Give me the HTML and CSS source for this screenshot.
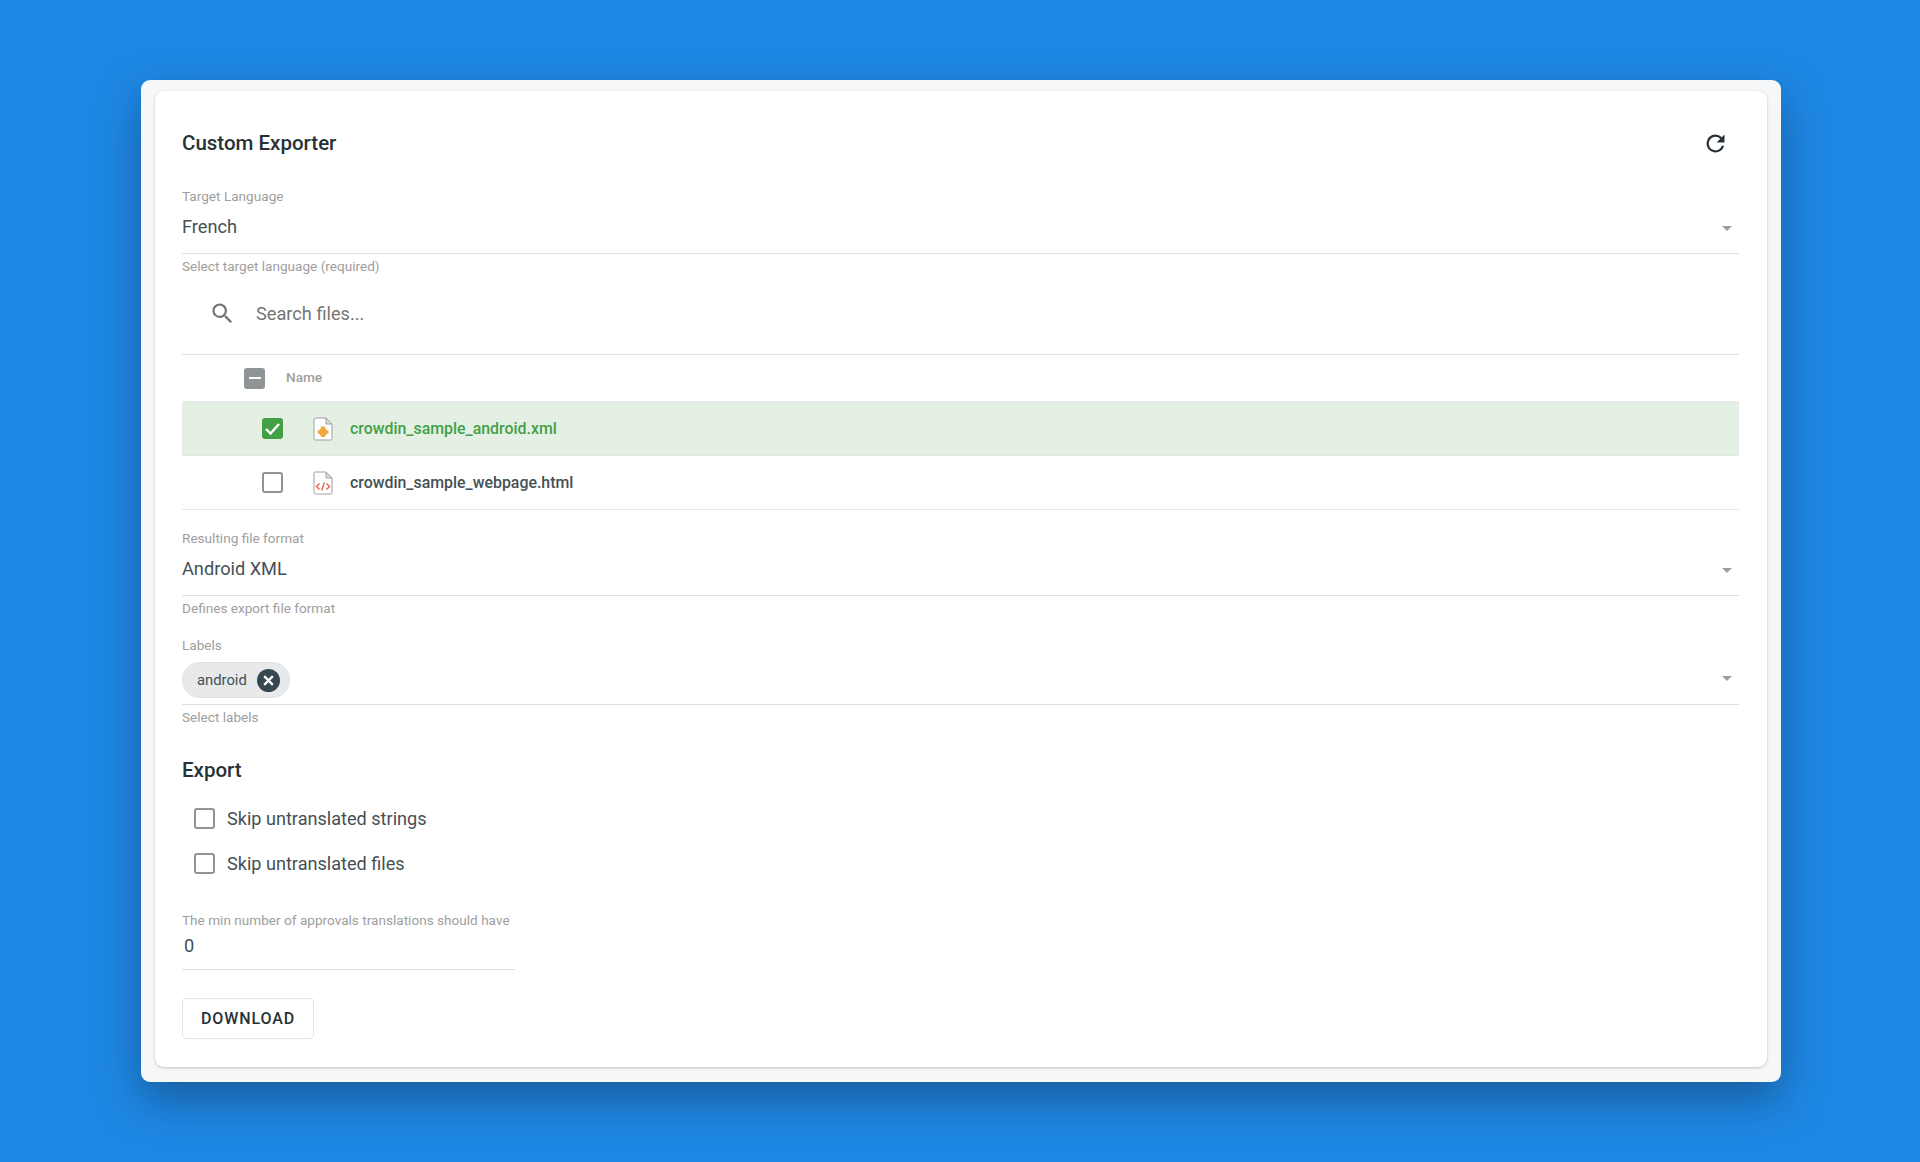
FILE: index.html
```html
<!DOCTYPE html>
<html lang="en">
<head>
<meta charset="utf-8">
<title>Custom Exporter</title>
<link rel="stylesheet" href="styles.css">
</head>
<body>
<main class="frame">
  <section class="card">
    <header class="head">
      <h1 class="title">Custom Exporter</h1>
      <svg class="refresh" viewBox="0 0 24 24"><path d="M17.65 6.35A7.96 7.96 0 0 0 12 4a8 8 0 1 0 7.73 10h-2.08A6 6 0 1 1 12 6c1.66 0 3.14.69 4.22 1.78L13 11h7V4l-2.35 2.35z"/></svg>
    </header>

    <div class="field">
      <div class="label">Target Language</div>
      <div class="select"><span>French</span><i class="caret"></i></div>
      <div class="help">Select target language (required)</div>
    </div>

    <div class="search">
      <svg class="search-icon" viewBox="0 0 24 24"><path d="M15.5 14h-.79l-.28-.27A6.47 6.47 0 0 0 16 9.5 6.5 6.5 0 1 0 9.5 16c1.61 0 3.09-.59 4.23-1.57l.27.28v.79l5 4.99L20.49 19l-4.99-5zm-6 0C7.01 14 5 11.99 5 9.5S7.01 5 9.5 5 14 7.01 14 9.5 11.99 14 9.5 14z"/></svg>
      <span class="search-text">Search files...</span>
    </div>

    <div class="table">
      <div class="thead">
        <span class="box box-mixed"><i></i></span>
        <span class="th">Name</span>
      </div>
      <div class="row row-on">
        <span class="box box-on"><svg viewBox="0 0 21 21"><path d="M4 11l4.500 4.500L17 6" fill="none" stroke="#fff" stroke-width="2.400"/></svg></span>
        <svg class="file" viewBox="0 0 20 24"><path d="M2.500 1h10.500L19 7v14.500a1.500 1.500 0 0 1-1.500 1.500h-15A1.500 1.500 0 0 1 1 21.500v-19A1.500 1.500 0 0 1 2.500 1z" fill="#fff" stroke="#9e9e9e"/><path d="M13 1v6h6z" fill="#e0e0e0" stroke="#9e9e9e"/><circle cx="10" cy="15" r="4" fill="#eeaa3c"/><path d="M7.800 9.500h4.400V20H7.800zM4.500 13.500h11v3h-11z" fill="#eeaa3c"/></svg>
        <span class="name">crowdin_sample_android.xml</span>
      </div>
      <div class="row">
        <span class="box"></span>
        <svg class="file" viewBox="0 0 20 24"><path d="M2.500 1h10.500L19 7v14.500a1.500 1.500 0 0 1-1.500 1.500h-15A1.500 1.500 0 0 1 1 21.500v-19A1.500 1.500 0 0 1 2.500 1z" fill="#fff" stroke="#9e9e9e"/><path d="M13 1v6h6z" fill="#e0e0e0" stroke="#9e9e9e"/><path d="M6.500 12.500L3.500 15.500l3 3M13.500 12.500l3 3-3 3M11.300 11.500l-2.600 8" fill="none" stroke="#ea5a36" stroke-width="1.300"/></svg>
        <span class="name">crowdin_sample_webpage.html</span>
      </div>
    </div>

    <div class="field field-format">
      <div class="label">Resulting file format</div>
      <div class="select"><span>Android XML</span><i class="caret"></i></div>
      <div class="help">Defines export file format</div>
    </div>

    <div class="field field-labels">
      <div class="label">Labels</div>
      <div class="select select-chips">
        <span class="chip">android<svg class="chip-x" viewBox="0 0 24 24"><circle cx="12" cy="12" r="12" fill="#37474f"/><path d="M7.500 7.500l9 9m0-9l-9 9" stroke="#fff" stroke-width="2.400" fill="none"/></svg></span>
        <i class="caret"></i>
      </div>
      <div class="help">Select labels</div>
    </div>

    <h2 class="subtitle">Export</h2>
    <label class="check"><span class="box"></span>Skip untranslated strings</label>
    <label class="check"><span class="box"></span>Skip untranslated files</label>

    <div class="number">
      <div class="label">The min number of approvals translations should have</div>
      <div class="number-value">0</div>
    </div>

    <button class="download" type="button">DOWNLOAD</button>
  </section>
</main>
</body>
</html>
```

FILE: styles.css
```css
* { box-sizing: border-box; }
html, body { margin: 0; height: 100%; }
body {
  background: #1e88e5;
  padding: 80px 139px 80px 141px;
  font-family: Roboto, "Liberation Sans", sans-serif;
  color: #455055;
}
.frame {
  height: 1002px;
  background: #f5f7f8;
  border-radius: 9px;
  padding: 11px 14px 15px;
  box-shadow: 0 18px 44px rgba(20, 50, 85, .5);
}
.card {
  height: 976px;
  background: #fff;
  border-radius: 9px;
  padding: 0 28px 0 27px;
  box-shadow: 0 1px 3px rgba(0, 0, 0, .22);
}
.head {
  height: 97px;
  display: flex;
  align-items: center;
  justify-content: space-between;
  padding-right: 10px;
  padding-top: 14px;
  padding-bottom: 7px;
}
.title { margin: 0; font-size: 20.500px; font-weight: 500; color: #263238; }
.refresh { width: 27px; height: 27px; fill: #263238; }

.label { font-size: 13.600px; line-height: 16px; color: #9e9e9e; }
.help { font-size: 13.600px; line-height: 16px; color: #9e9e9e; margin-top: 4px; }
.select {
  display: flex;
  align-items: center;
  justify-content: space-between;
  height: 50px;
  border-bottom: 1px solid #e0e0e0;
  font-size: 18.200px;
  padding-right: 7px;
  padding-bottom: 4px;
}
.caret {
  width: 0;
  height: 0;
  border: 5px solid transparent;
  border-top: 5px solid #9e9e9e;
  border-bottom: 0;
  margin-top: 4px;
}

.search {
  height: 79px;
  margin-top: 2px;
  display: flex;
  align-items: center;
  padding-left: 27px;
  border-bottom: 1px solid #e0e0e0;
  padding-bottom: 4px;
}
.search-icon { width: 27px; height: 27px; fill: #757575; }
.search-text { margin-left: 20px; font-size: 18.200px; color: #757575; }

.box {
  flex: none;
  display: flex;
  align-items: center;
  justify-content: center;
  width: 21px;
  height: 21px;
  border: 2.500px solid #8f9497;
  border-radius: 3px;
  background: #fff;
}
.box svg { width: 21px; height: 21px; flex: none; }
.box-mixed { background: #8f9497; }
.box-mixed i { width: 12px; height: 2.500px; background: #fff; }
.box-on { background: #43a047; border-color: #43a047; }

.thead {
  height: 47px;
  display: flex;
  align-items: center;
  padding-left: 62px;
  border-bottom: 1px solid #e8e8e8;
}
.th { margin: 0 0 2px 21px; font-size: 13.600px; font-weight: 500; color: #9e9e9e; }
.row {
  height: 54px;
  display: flex;
  align-items: center;
  padding-left: 80px;
  border-bottom: 1px solid #e8e8e8;
}
.row-on { background: #e3f0e3; border-bottom-color: #dcebdc; color: #43a047; }
.file { width: 20px; height: 24px; margin-left: 30px; flex: none; }
.name { margin-left: 17px; font-size: 15.900px; font-weight: 500; }

.field-format { margin-top: 20px; }
.field-labels { margin-top: 21px; }
.select-chips { padding-top: 3px; padding-bottom: 0; height: 52px; }
.select-chips .caret { margin: 0 0 3px; }
.chip {
  display: flex;
  align-items: center;
  width: 108px;
  height: 36px;
  padding: 0 9px 0 14px;
  justify-content: space-between;
  border: 1px solid #dde1e3;
  border-radius: 18px;
  background: #e7e9ea;
  font-size: 14.800px;
}
.chip-x { width: 23px; height: 23px; }

.subtitle { margin: 33px 0 0; font-size: 20.500px; line-height: 24px; font-weight: 500; color: #263238; }
.check {
  display: flex;
  align-items: center;
  gap: 12px;
  height: 45px;
  padding-left: 12px;
  font-size: 18.100px;
}
.check:first-of-type { margin-top: 14px; }

.number { margin-top: 26px; width: 333px; border-bottom: 1px solid #e0e0e0; height: 58px; }
.number .label { white-space: nowrap; }
.number-value { margin: 6px 0 0 2px; font-size: 18.200px; line-height: 24px; }

.download {
  display: block;
  margin-top: 28px;
  width: 132px;
  height: 41px;
  background: #fff;
  border: 1px solid #e3e5e6;
  border-radius: 4px;
  font-family: inherit;
  font-size: 16px;
  font-weight: 500;
  letter-spacing: .9px;
  color: #263238;
}
```
